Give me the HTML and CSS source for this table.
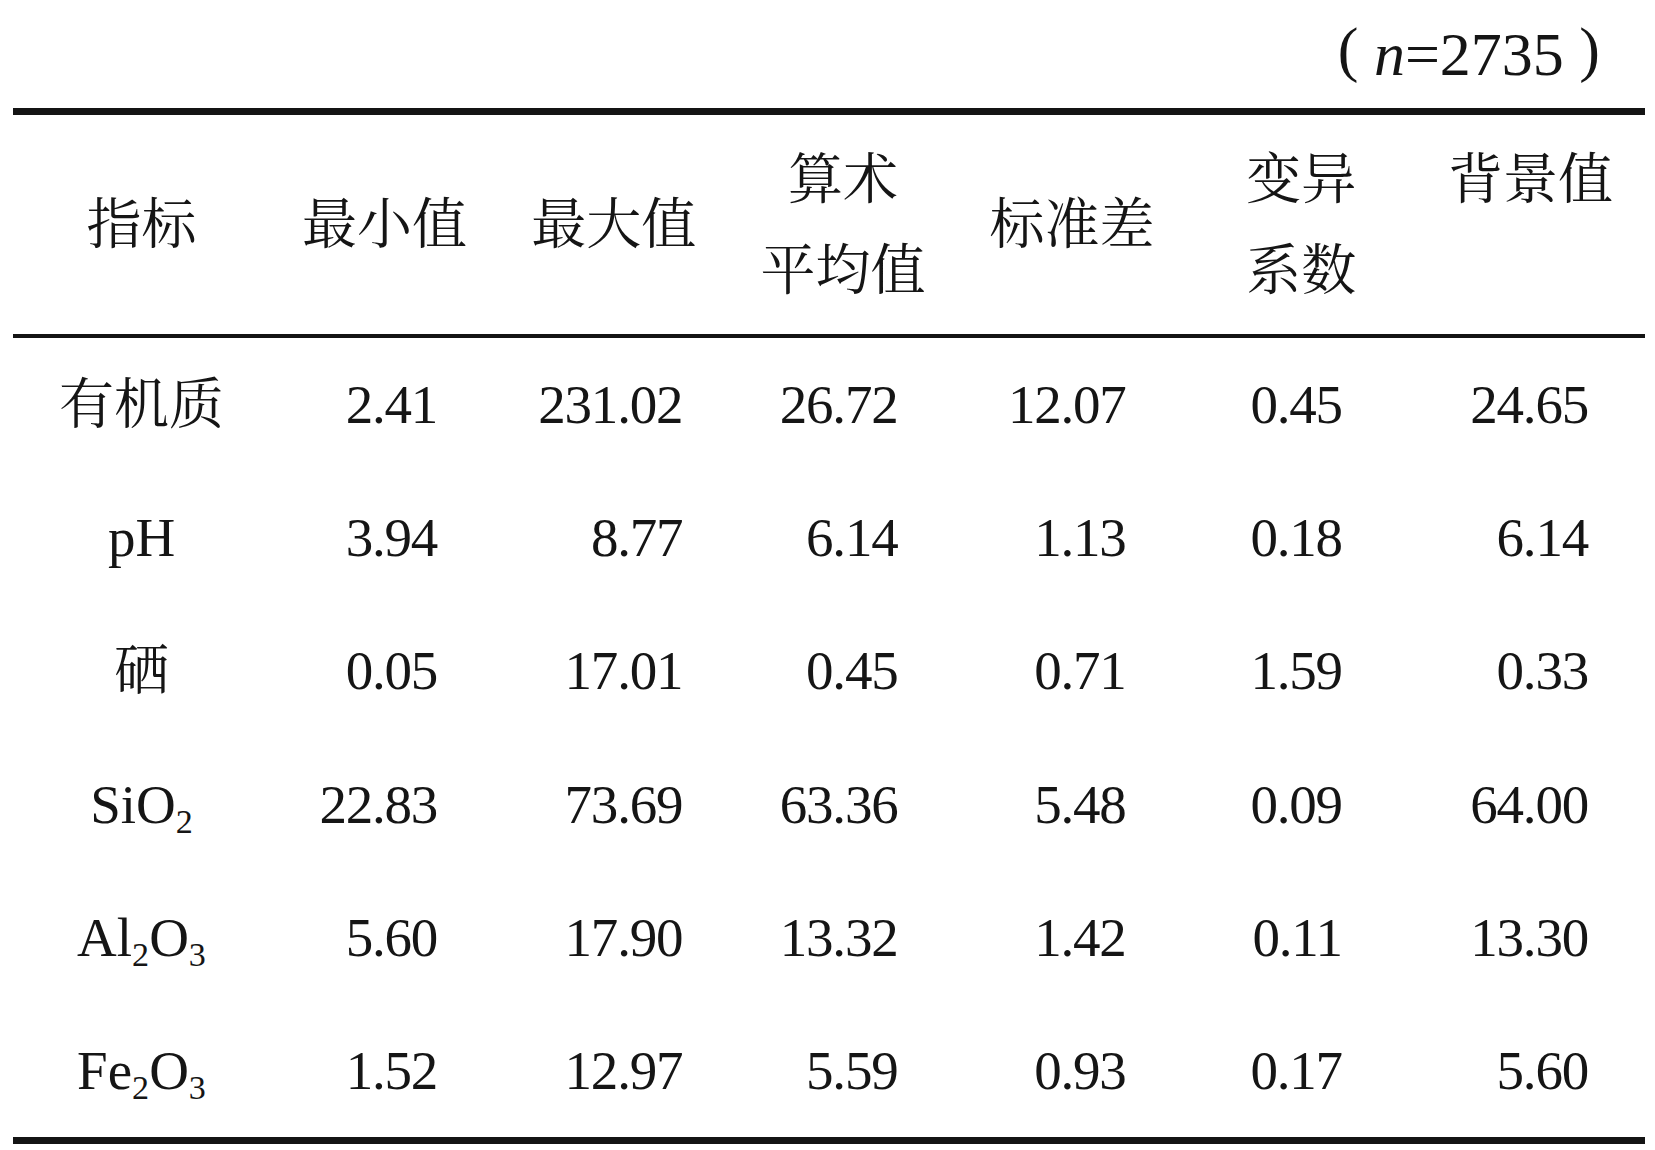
FILE: index.html
```html
<!DOCTYPE html>
<html lang="zh-CN">
<head>
<meta charset="utf-8">
<title>土壤指标统计</title>
<link rel="stylesheet" href="styles.css">
</head>
<body>
<div class="caption"><span class="paren">(</span> <i>n</i>=2735 <span class="paren">)</span></div>
<div class="table">
  <div class="row head">
    <div class="cell">指标</div>
    <div class="cell">最小值</div>
    <div class="cell">最大值</div>
    <div class="cell">算术<br>平均值</div>
    <div class="cell">标准差</div>
    <div class="cell">变异<br>系数</div>
    <div class="cell top">背景值</div>
  </div>
  <div class="row">
    <div class="cell label"><span>有机质</span></div>
    <div class="cell num">2.41</div>
    <div class="cell num">231.02</div>
    <div class="cell num">26.72</div>
    <div class="cell num">12.07</div>
    <div class="cell num">0.45</div>
    <div class="cell num">24.65</div>
  </div>
  <div class="row">
    <div class="cell label"><span>pH</span></div>
    <div class="cell num">3.94</div>
    <div class="cell num">8.77</div>
    <div class="cell num">6.14</div>
    <div class="cell num">1.13</div>
    <div class="cell num">0.18</div>
    <div class="cell num">6.14</div>
  </div>
  <div class="row">
    <div class="cell label"><span>硒</span></div>
    <div class="cell num">0.05</div>
    <div class="cell num">17.01</div>
    <div class="cell num">0.45</div>
    <div class="cell num">0.71</div>
    <div class="cell num">1.59</div>
    <div class="cell num">0.33</div>
  </div>
  <div class="row">
    <div class="cell label"><span>SiO<sub>2</sub></span></div>
    <div class="cell num">22.83</div>
    <div class="cell num">73.69</div>
    <div class="cell num">63.36</div>
    <div class="cell num">5.48</div>
    <div class="cell num">0.09</div>
    <div class="cell num">64.00</div>
  </div>
  <div class="row">
    <div class="cell label"><span>Al<sub>2</sub>O<sub>3</sub></span></div>
    <div class="cell num">5.60</div>
    <div class="cell num">17.90</div>
    <div class="cell num">13.32</div>
    <div class="cell num">1.42</div>
    <div class="cell num">0.11</div>
    <div class="cell num">13.30</div>
  </div>
  <div class="row last">
    <div class="cell label"><span>Fe<sub>2</sub>O<sub>3</sub></span></div>
    <div class="cell num">1.52</div>
    <div class="cell num">12.97</div>
    <div class="cell num">5.59</div>
    <div class="cell num">0.93</div>
    <div class="cell num">0.17</div>
    <div class="cell num">5.60</div>
  </div>
</div>
</body>
</html>
```
FILE: styles.css
```css
html, body {
  margin: 0;
  padding: 0;
  background: #ffffff;
}

body {
  width: 1655px;
  color: #151515;
  font-family: "Liberation Serif", "Noto Serif CJK SC", "Noto Sans CJK SC", serif;
}

.caption {
  padding-top: 18px;
  padding-right: 55px;
  height: 62px;
  line-height: 62px;
  font-size: 62px;
  text-align: right;
  white-space: pre;
}

.caption .paren {
  vertical-align: 0.08em;
  font-weight: 300;
}

.table {
  margin-top: 28px;
  margin-left: 13px;
  width: 1632px;
  display: flex;
  flex-direction: column;
  font-size: 55px;
}

.row {
  display: grid;
  grid-template-columns: 257px repeat(6, 1fr);
  height: 133.17px;
  box-sizing: border-box;
}

.row.head {
  height: 230px;
  border-top: 7px solid #141414;
  border-bottom: 4px solid #141414;
}

.row.last {
  height: 140.17px;
  border-bottom: 7px solid #141414;
}

.cell {
  display: flex;
  align-items: center;
  line-height: 133px;
  white-space: nowrap;
}

.head .cell {
  justify-content: center;
  text-align: center;
  line-height: 91px;
}

.head .cell.top {
  align-items: flex-start;
  padding-top: 18.5px;
}

.label {
  justify-content: center;
}

.label sub {
  font-size: 0.62em;
  vertical-align: -10px;
  line-height: 0;
}

.num {
  justify-content: flex-end;
  letter-spacing: -1.2px;
}

.num:nth-child(2) { padding-right: 62px; }
.num:nth-child(3) { padding-right: 46px; }
.num:nth-child(4) { padding-right: 60px; }
.num:nth-child(5) { padding-right: 61px; }
.num:nth-child(6) { padding-right: 74px; }
.num:nth-child(7) { padding-right: 57px; }
```
